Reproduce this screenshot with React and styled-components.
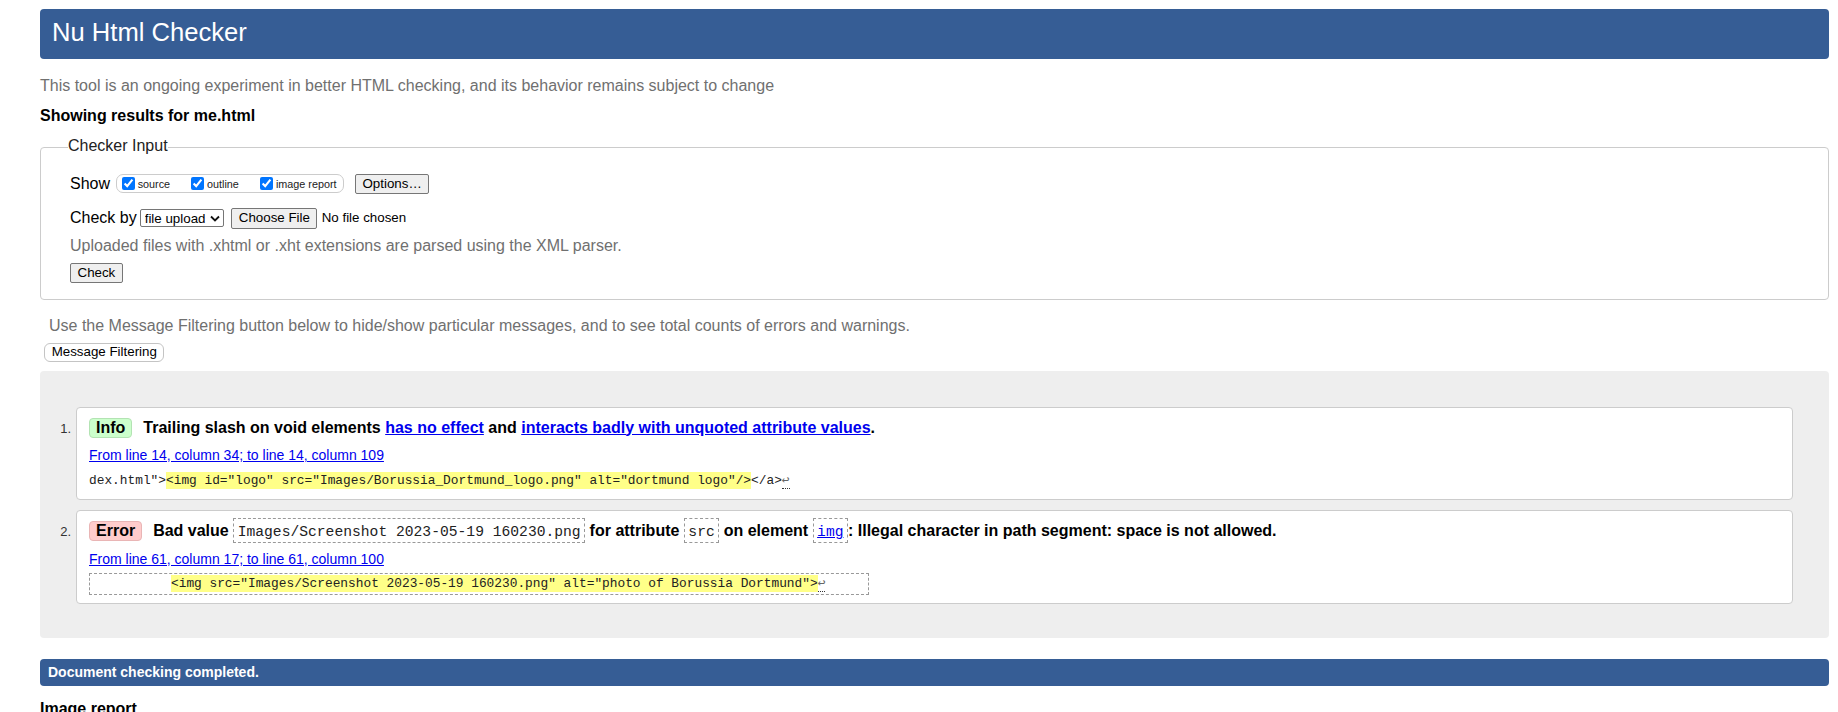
import React from 'react';
import styled, { createGlobalStyle } from 'styled-components';

const GlobalStyle = createGlobalStyle`
  body {
    margin: 0;
    background: #fff;
    color: #000;
    font-family: "Liberation Sans", Arial, sans-serif;
    font-size: 16px;
  }
`;

const mono = `"Liberation Mono", "DejaVu Sans Mono", monospace`;

const Page = styled.div`
  padding: 9px 9px 0 40px;
`;

const Title = styled.h1`
  margin: 0;
  height: 50px;
  padding: 0 12px;
  border-radius: 4px;
  background: #365d95;
  color: #fff;
  font-size: 25.6px;
  font-weight: normal;
  line-height: 46px;
`;

const Note = styled.p`
  margin: ${({ $top }) => $top}px 0 0 ${({ $indent }) => $indent || 0}px;
  color: #707070;
  line-height: 20px;
`;

const Lead = styled.p`
  margin: 9.5px 0 0;
  font-weight: bold;
  line-height: 20px;
`;

const InputSet = styled.fieldset`
  margin: 10px 0 0;
  padding: 0 30px 16px 29px;
  border: 1px solid #ccc;
  border-radius: 4px;
  min-width: 0;
`;

const Legend = styled.legend`
  margin-left: -2px;
  padding: 0 0 3px;
  color: #222;
  line-height: 20px;
`;

const Row = styled.div`
  display: flex;
  align-items: center;
  height: ${({ $h }) => $h}px;
  margin-top: ${({ $top }) => $top}px;
  line-height: 20px;
`;

const ShowGroup = styled.span`
  display: inline-flex;
  align-items: center;
  box-sizing: border-box;
  height: 19px;
  margin: 0 11px 0 5.6px;
  padding: 0 6.5px 0 1px;
  border: 1px solid #ccc;
  border-radius: 7px;
`;

const Option = styled.label`
  display: inline-flex;
  align-items: center;
  margin-right: ${({ $last }) => ($last ? 0 : 17)}px;
  color: #222;
  font-size: 10.8px;

  input {
    width: 13px;
    height: 13px;
    margin: 0 3px 0 4px;
  }
`;

const Button = styled.button`
  box-sizing: border-box;
  height: ${({ $h }) => $h || 20}px;
  margin-left: ${({ $gap }) => $gap || 0}px;
  padding: 0 6.5px;
  border: 1px solid #767676;
  border-radius: 2px;
  background: #efefef;
  color: #000;
  font-family: "Liberation Sans", Arial, sans-serif;
  font-size: 13.33px;
  line-height: 16px;
`;

const FilterButton = styled(Button)`
  height: 18.5px;
  margin-left: 4.3px;
  padding: 0 6.4px;
  border-color: #c4c4c4;
  border-radius: 6px;
  background: #fff;
`;

const SelectBox = styled.span`
  display: inline-flex;
  align-items: center;
  box-sizing: border-box;
  height: 18px;
  margin-left: 3px;
  border: 1px solid #767676;
  border-radius: 2px;
  background: #fff;

  select {
    appearance: none;
    box-sizing: border-box;
    width: 65px;
    padding: 0 0 0 4px;
    border: 0;
    background: transparent;
    color: #000;
    font-family: "Liberation Sans", Arial, sans-serif;
    font-size: 13.33px;
    outline: none;
  }

  svg {
    margin: 0 3px 0 4px;
  }
`;

const Plain = styled.span`
  margin-left: 4.3px;
  font-size: 13.33px;
`;

const Results = styled.div`
  margin-top: 9px;
  padding: 36px 36px 34px 0;
  border-radius: 4px;
  background: #eee;
`;

const MessageList = styled.ol`
  display: flex;
  flex-direction: column;
  gap: 10px;
  margin: 0;
  padding: 0;
  list-style: none;
`;

const Item = styled.li`
  display: flex;
  align-items: baseline;
`;

const Num = styled.span`
  flex: none;
  box-sizing: border-box;
  width: 36px;
  padding-right: 5px;
  color: #333;
  font-size: 13px;
  text-align: right;
`;

const Card = styled.div`
  flex: 1;
  min-width: 0;
  padding: 8px 12px;
  border: 1px solid #ccc;
  border-radius: 4px;
  background: #fff;
`;

const Summary = styled.p`
  margin: 0;
  font-weight: bold;
  line-height: 24px;
`;

const Badge = styled.strong`
  display: inline-block;
  margin-right: 11px;
  padding: 0 6px;
  border: 1px solid ${({ $kind }) => ($kind === 'error' ? '#e9b5b5' : '#b3e3b3')};
  border-radius: 4px;
  background: ${({ $kind }) => ($kind === 'error' ? '#fcc' : '#cfc')};
  line-height: 18px;
`;

const Link = styled.a`
  color: #00e;
  text-decoration: underline;
`;

const Code = styled.code`
  padding: 5px 3.5px 1.5px;
  border: 1px dashed #999;
  color: #222;
  font-family: ${mono};
  font-size: 14.66px;
  font-weight: normal;
  line-height: 16px;
`;

const Location = styled.p`
  margin: 6.4px 0 0;
  font-size: 14px;
  line-height: 18px;
`;

const Extract = styled.p`
  width: fit-content;
  margin: ${({ $boxed }) => ($boxed ? 5 : 7.45)}px 0 0;
  padding: 0 ${({ $boxed }) => ($boxed ? 4 : 0)}px;
  border: ${({ $boxed }) => ($boxed ? '1px dashed #999' : '0')};
  color: #222;
  font-family: ${mono};
  font-size: 12.83px;
  line-height: 20px;
  white-space: pre;
`;

const Mark = styled.mark`
  padding: 1px 0;
  background: #ff8;
  color: #222;
`;

const Lf = styled.span`
  border-bottom: 1px dotted #333;
  color: #666;
`;

const Done = styled.div`
  margin-top: 21.5px;
  padding: 0 8px;
  border-radius: 4px;
  background: #365d95;
  color: #fff;
  font-size: 14px;
  font-weight: bold;
  line-height: 27px;
`;

const SubHead = styled.h2`
  margin: 12.5px 0 0;
  font-size: 16px;
  line-height: 20px;
`;

const Chevron = () => (
  <svg width="10" height="7" viewBox="0 0 10 7" aria-hidden="true">
    <path d="M1 1.5 L5 5.5 L9 1.5" fill="none" stroke="#111" strokeWidth="1.8" />
  </svg>
);

const options = ['source', 'outline', 'image report'];

const App = () => (
  <Page>
    <GlobalStyle />
    <Title>Nu Html Checker</Title>
    <Note $top={17}>
      This tool is an ongoing experiment in better HTML checking, and its behavior remains subject to change
    </Note>
    <Lead>Showing results for me.html</Lead>

    <InputSet>
      <Legend>Checker Input</Legend>
      <Row $h={20} $top={15}>
        Show
        <ShowGroup>
          {options.map((o, i) => (
            <Option key={o} $last={i === options.length - 1}>
              <input type="checkbox" defaultChecked />
              {o}
            </Option>
          ))}
        </ShowGroup>
        <Button>Options…</Button>
      </Row>
      <Row $h={21} $top={14}>
        Check by
        <SelectBox>
          <select defaultValue="file">
            <option value="file">file upload</option>
          </select>
          <Chevron />
        </SelectBox>
        <Button $h={21} $gap={7.6}>Choose File</Button>
        <Plain>No file chosen</Plain>
      </Row>
      <Note $top={7}>Uploaded files with .xhtml or .xht extensions are parsed using the XML parser.</Note>
      <Row $h={20} $top={7.5}>
        <Button>Check</Button>
      </Row>
    </InputSet>

    <Note $top={16} $indent={9}>
      Use the Message Filtering button below to hide/show particular messages, and to see total counts of errors and warnings.
    </Note>
    <Row $h={18.5} $top={7}>
      <FilterButton>Message Filtering</FilterButton>
    </Row>

    <Results>
      <MessageList>
        <Item>
          <Num>1.</Num>
          <Card>
            <Summary>
              <Badge>Info</Badge>
              Trailing slash on void elements <Link href="#">has no effect</Link> and{' '}
              <Link href="#">interacts badly with unquoted attribute values</Link>.
            </Summary>
            <Location>
              <Link href="#">From line 14, column 34; to line 14, column 109</Link>
            </Location>
            <Extract>
              {'dex.html">'}
              <Mark>{'<img id="logo" src="Images/Borussia_Dortmund_logo.png" alt="dortmund logo"/>'}</Mark>
              {'</a>'}
              <Lf>↩</Lf>
            </Extract>
          </Card>
        </Item>
        <Item>
          <Num>2.</Num>
          <Card>
            <Summary>
              <Badge $kind="error">Error</Badge>
              Bad value <Code>Images/Screenshot 2023-05-19 160230.png</Code> for attribute <Code>src</Code> on element{' '}
              <Code>
                <Link href="#">img</Link>
              </Code>
              : Illegal character in path segment: space is not allowed.
            </Summary>
            <Location>
              <Link href="#">From line 61, column 17; to line 61, column 100</Link>
            </Location>
            <Extract $boxed>
              {'          '}
              <Mark>{'<img src="Images/Screenshot 2023-05-19 160230.png" alt="photo of Borussia Dortmund">'}</Mark>
              <Lf>↩</Lf>
              {'     '}
            </Extract>
          </Card>
        </Item>
      </MessageList>
    </Results>

    <Done>Document checking completed.</Done>
    <SubHead>Image report</SubHead>
  </Page>
);

export default App;
